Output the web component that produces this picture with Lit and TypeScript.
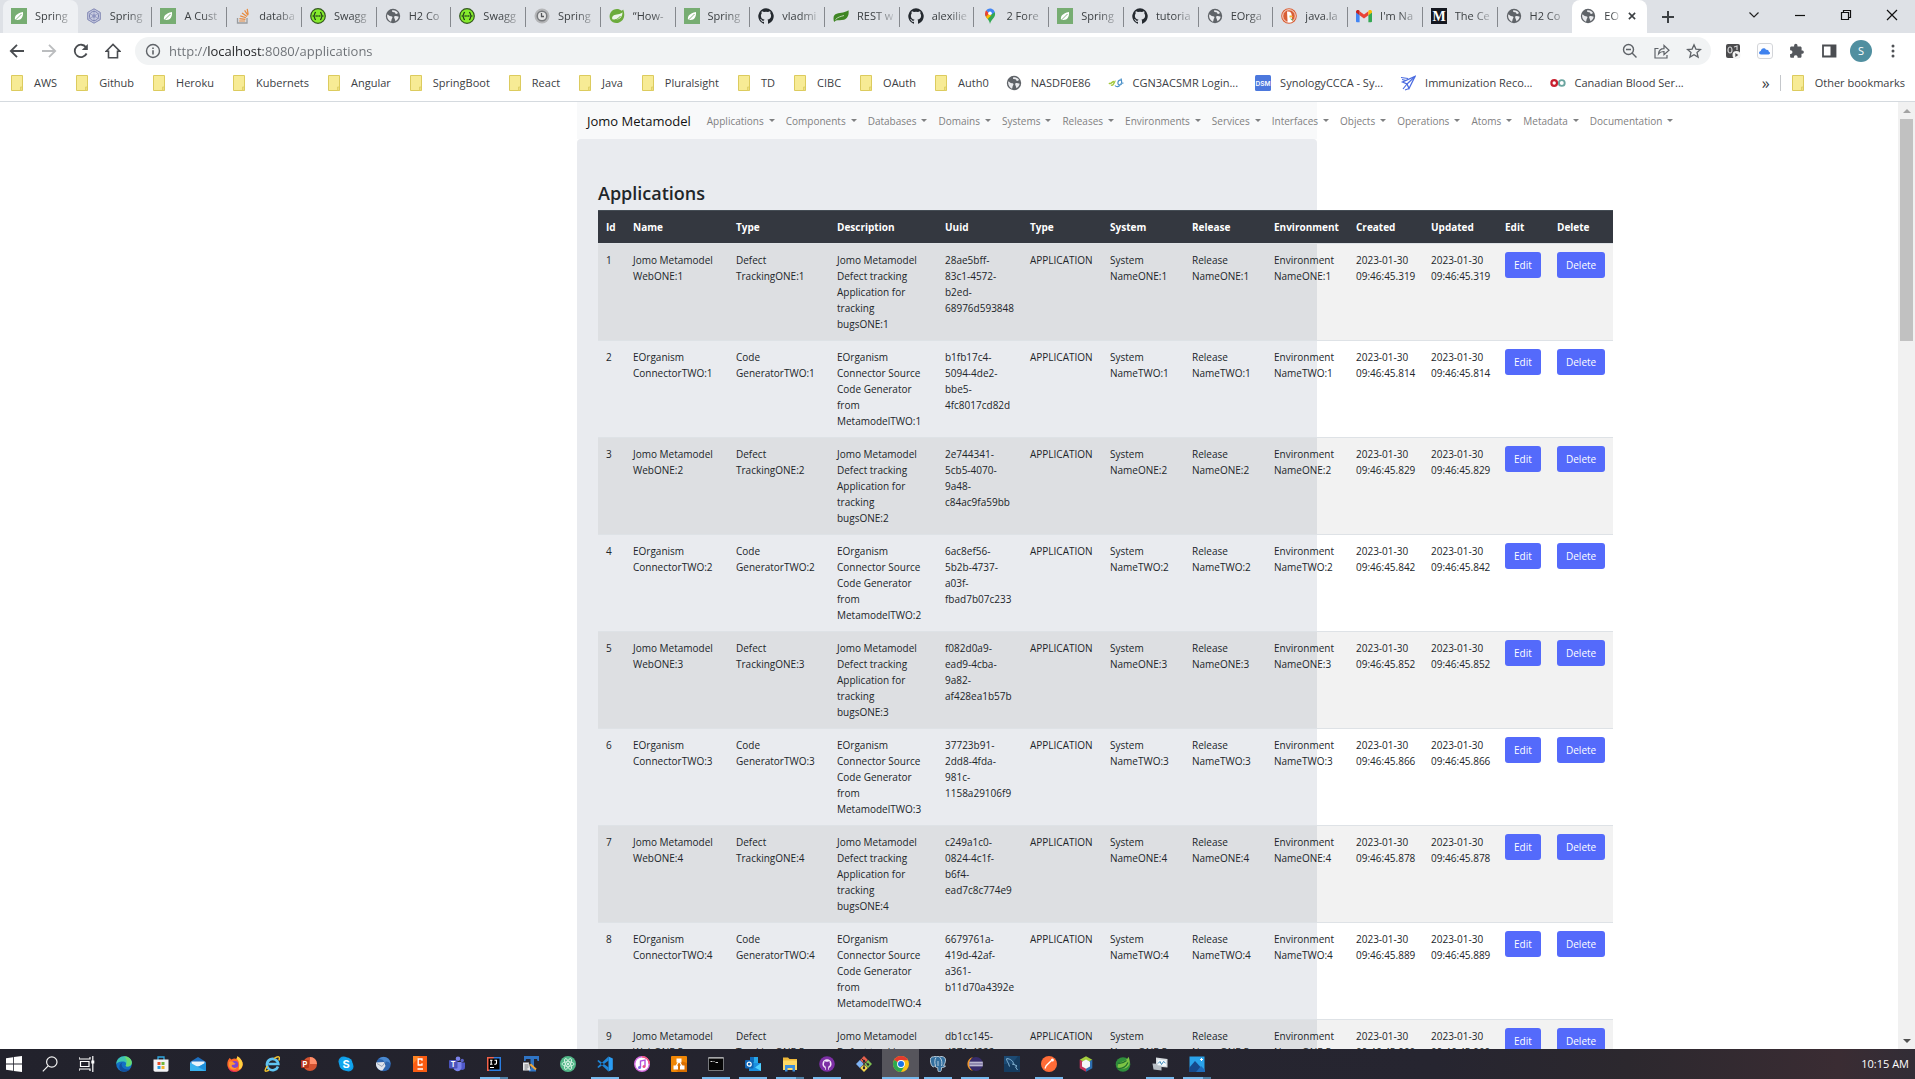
import { LitElement, html, css, svg } from "lit";
import { customElement } from "lit/decorators.js";

const pic = (body: unknown, box = "0 0 16 16") =>
  html`<svg class="pic" viewBox=${box} aria-hidden="true">${body}</svg>`;

/* ---------- site icons ---------- */
const leafTile = () => pic(svg`<rect width="16" height="16" fill="#77ad72"/><path d="M4 12c-.6-4 1.400-6.500 8-8 .4 4.500-1.500 8-5.500 8-1 0-1.500-.2-2-.6z" fill="#fff"/><path d="M4 12.500 10.500 6" stroke="#77ad72" stroke-width=".9"/>`);
const hexWheel = () => pic(svg`<path d="M8 .8 14.300 4.400v7.200L8 15.200 1.700 11.600V4.400z" fill="#c9cce0" stroke="#8288b4"/><circle cx="8" cy="8" r="4.600" fill="none" stroke="#7d84b3"/><circle cx="8" cy="8" r="1.800" fill="#8a90bd"/><path d="M8 1v14M2 4.500l12 7M14 4.500l-12 7" stroke="#8f95bf" stroke-width=".7"/>`);
const stack = () => pic(svg`<path d="M2.500 10v5h9.500v-5" fill="none" stroke="#9a9c9f" stroke-width="1.300"/><path d="M4.200 13h6M4.400 10.600l6 .7M5.200 7.900l5.700 1.900M7 5l5 3.400M9.600 2.400l3.400 5M12.200.8l1 5.800" stroke="#e88a3c" stroke-width="1.200"/>`);
const swagger = () => pic(svg`<circle cx="8" cy="8" r="7.300" fill="#85ea2d" stroke="#33571f" stroke-width="1.200"/><path d="M6 4.300c-2.200 0-.6 3-2.500 3.700 1.900.7.300 3.700 2.500 3.700M10 4.300c2.200 0 .6 3 2.500 3.700-1.900.7-.3 3.700-2.500 3.700" fill="none" stroke="#24401a" stroke-width="1.300"/><path d="M5.500 8h5" stroke="#24401a" stroke-width="1.500" stroke-dasharray="1.300 .5"/>`);
const globe = () => pic(svg`<circle cx="8" cy="8" r="7.200" fill="#5f6368"/><path d="M2.200 6.500c1.500.2 2 1.800 3.800 1.800 1.700 0 1.800 1.400 1 2.300-.7.800-.3 2.200-1 3.100-2.500-1-4.300-3.900-3.800-7.200zM7.200 2.300c-.8 1.500.7 2 2 1.900 1.300 0 .8 1.600 1.800 1.700 1 .2 1.300-.7 2.200-.6-1.200-2.200-3.500-3.300-6-3zM9.500 8.200c1.200-.5 2.900.2 4.200.6-.4 2-1.700 3.600-3.400 4.400.3-1.600-2-3.900-.8-5z" fill="#e9eaed"/>`);
const clock = () => pic(svg`<circle cx="8" cy="8" r="7.500" fill="#b5b6b8"/><circle cx="8" cy="8" r="5.500" fill="#77797c"/><circle cx="8" cy="8" r="4" fill="#e5e5e6"/><path d="M7.500 5v3.500H10" fill="none" stroke="#55575a" stroke-width="1.300"/>`);
const spring = () => pic(svg`<path d="M14.200 1.500c1.500 3.500 1.500 7.700-.6 10.400C10 16.200 4 15.800 1.500 12 .2 9.500.2 6.500 1.800 4.300 4.500.5 9.500.200 12.500 2.700c.7-.2 1.300-.6 1.700-1.200z" fill="#6cab3c"/><path d="M13.500 4.200c-2 2.400-6.500 1.600-9 3.300-1.600 1-1.800 2.900-.9 4.100 3.900.9 9.900-.4 9.900-7.400z" fill="#eef4ea"/><path d="M3 12.300c3.500 0 6.500-1.300 8.500-4.300" fill="none" stroke="#6cab3c"/>`);
const github = () => pic(svg`<path d="M8 .2a8 8 0 0 0-2.500 15.500c.4.1.500-.2.500-.4v-1.500c-2.200.5-2.700-1-2.700-1-.4-.9-.9-1.200-.9-1.200-.7-.5.1-.5.100-.5.8.1 1.200.8 1.200.8.700 1.300 1.900.9 2.300.7.100-.5.300-.9.500-1.100-1.800-.2-3.600-.9-3.600-4 0-.9.300-1.600.8-2.100-.1-.2-.4-1 .1-2.100 0 0 .7-.2 2.200.8a7.500 7.500 0 0 1 4 0c1.500-1 2.200-.8 2.200-.8.400 1.100.2 1.900.1 2.100.5.600.8 1.300.8 2.100 0 3.100-1.900 3.800-3.700 4 .3.300.6.800.6 1.500v2.300c0 .2.100.5.500.4A8 8 0 0 0 8 .2z" fill="#24292f"/>`);
const leaf = () => pic(svg`<path d="M.500 10.500C.500 4.500 6 5.500 10 4.500c2.400-.6 3.800-1.300 5.500-2.300.6 4-.4 8.300-4.500 9.500-2.800.8-6 .1-8 .8-.8.400-1.300.8-1.800 1.500-.5-.9-.7-2.200-.7-3.500z" fill="#3f8624"/><path d="M2.500 11.500C5 8.800 8 8.500 11 7.500" stroke="#c8dcc0" stroke-width=".9" fill="none"/>`);
const mapPin = () => pic(svg`<path d="M8 16c-.5-2.500-1.300-3.700-2.700-5.500C4 8.800 3 7.500 3 5.200L8 5.500l4.800-1.600c.9 2.900-.2 4.700-1.700 6.600C9.700 12.300 8.600 13.500 8 16z" fill="#34a853"/><path d="M4.200 2.200 8 5.500 4.200 9.200C2.600 6.700 2.700 4 4.200 2.200z" fill="#ea4335"/><path d="M4.200 2.200A5 5 0 0 1 12.800 4L9 7z" fill="#4285f4"/><path d="M4 9 6.500 6l3 1-4 4.200z" fill="#fbbc04"/><circle cx="8" cy="5.200" r="1.800" fill="#fff"/>`);
const duck = () => pic(svg`<circle cx="8" cy="8" r="7.800" fill="#d95f35"/><circle cx="8" cy="8" r="6.300" fill="none" stroke="#fff" stroke-width=".8"/><path d="M6 3.500c3.500-.5 5 1.500 4.700 4.700l.6 5.600c-1.800.7-3.300.7-4.700.2z" fill="#fff"/><path d="M8.500 7.500c2 0 3 .3 3.500.9-1 .9-2.500.8-3.500 1.200z" fill="#f4b731"/><path d="m9 10.500 2.500.5v2z" fill="#5bb65b"/>`);
const gmail = () => pic(svg`<path d="M0 4v9.300c0 .5.400.9.900.9h2.700V6.800z" fill="#4285f4"/><path d="M12.400 6.800v7.400h2.700c.5 0 .9-.4.900-.9V4z" fill="#34a853"/><path d="m3.600 3.300 4.400 3.300 4.400-3.300v3.900L8 10.500 3.600 7.200z" fill="#ea4335"/><path d="M0 3.700c0-1.600 1.800-2.300 2.900-1.400l.7.500v4.400L0 4.600z" fill="#c5221f"/><path d="M16 3.700c0-1.600-1.800-2.300-2.900-1.400l-.7.500v4.400L16 4.600z" fill="#fbbc04"/>`);
const medium = () => pic(svg`<rect width="16" height="16" fill="#14171f"/><text x="8" y="13" text-anchor="middle" font-family="Liberation Serif, serif" font-weight="700" font-size="14" fill="#fff">M</text>`);

/* ---------- bookmark icons ---------- */
const folder = () => pic(svg`<path d="M2.500.500h11v15h-11z" fill="#f7eb95" stroke="#dccb5e"/><path d="M11.500 12h1.500v3.500h-1.500z" fill="#f7eb95" stroke="#dccb5e" stroke-width=".8"/>`);
const scribble = () => pic(svg`<path d="M1 8c1.500 2 3-1.500 5-1.500M3 10c2.500 1.500 3.500-4 4.500-4" fill="none" stroke="#a3c83c" stroke-width="1.400"/><path d="M13.500 5c-4-.5-5 5-1.500 5 2.500 0 1.500-5 1-6.500M12 9.500c-1 3-4 2.500-5 1M15.500 8l-3 .5" fill="none" stroke="#4a90c8" stroke-width="1.200"/>`);
const dsm = () => pic(svg`<rect width="16" height="16" rx="1.500" fill="#4c78dd"/><text x="8" y="11" text-anchor="middle" font-family="Inter, sans-serif" font-weight="600" font-size="6.500" fill="#fff">DSM</text>`);
const plane = () => pic(svg`<path d="M15 1.500 9 13.500 7 9 2.500 7z" fill="#fff" stroke="#4a6be0" stroke-width="1.300"/><path d="M15 1.500 7 9M1 2.500l7 1M2 4.500l4 1M7 9l-4 5M9 13.500 5 15" stroke="#4a6be0" stroke-width="1.200" fill="none"/>`);
const rings = () => pic(svg`<circle cx="4.200" cy="8" r="2.800" fill="none" stroke="#c8202f" stroke-width="2.200"/><circle cx="11.800" cy="8" r="2.900" fill="none" stroke="#6ba5a0" stroke-width="1.900"/>`);

/* ---------- toolbar icons ---------- */
const line = (d: string, w = "1.600", c = "#5f6368") => pic(svg`<path d=${d} fill="none" stroke=${c} stroke-width=${w}/>`);
const back = () => line("M15 8H2M8 1.800 1.800 8 8 14.200", "1.800", "#4a4d51");
const forward = () => line("M1 8h13M8 1.800 14.200 8 8 14.200", "1.800", "#bbbdbf");
const reload = () => pic(svg`<path d="M13.600 10.500A6.200 6.200 0 1 1 13 4.300" fill="none" stroke="#4a4d51" stroke-width="1.800"/><path d="M14.800 1v6H8.800z" fill="#4a4d51"/>`);
const home = () => line("M1.200 8.300 8 1.500l6.800 6.800H12.500v6.400h-9V8.300z", "1.600", "#4a4d51");
const info = () => pic(svg`<circle cx="8" cy="8" r="6.500" fill="none" stroke="#5f6368" stroke-width="1.400"/><path d="M8 7.200v4.200M8 4.400V6" stroke="#5f6368" stroke-width="1.600"/>`);
const zoomOut = () => line("M10.300 10.300 14.500 14.500M4 6.500h5M11.500 6.500a5 5 0 1 1-10 0 5 5 0 0 1 10 0z", "1.400");
const share = () => line("M4.500 5.500H1v9.500h12v-3M4.500 11c.3-3.500 2.500-5.300 5.500-5.300V2.500l5 4.700-5 4.500V8.500C7.500 8.400 5.800 9.200 4.500 11z", "1.200");
const star = () => line("m8 1.800 1.900 4.300 4.600.4-3.500 3 1.100 4.600L8 11.700l-4.100 2.400L5 9.500l-3.500-3 4.600-.4z", "1.300");
const extDark = () => pic(svg`<rect x="1" y="1" width="14" height="14" rx="2" fill="#4b4b4d"/><path d="M3 7c0-4 4-4 4 0s-4 4-4 0M9 4l3-1v4" fill="none" stroke="#d0d0d2" stroke-width="1.200"/><circle cx="11.500" cy="12" r="4" fill="#f4f4f4"/><path d="m10.300 10 3 2-3 2z" fill="#4b4b4d"/>`);
const cloud = () => pic(svg`<rect x=".5" y=".5" width="15" height="15" rx="2.500" fill="#fdfdfe" stroke="#d3d5d9"/><path d="M4 11.500c-2.500 0-2.500-3.300-.2-3.500C4 5.500 7.500 4 9 6.800c2-.6 3 .9 2.800 2 1.700.2 1.600 2.700-.2 2.700z" fill="#3f82ee"/>`);
const puzzle = () => pic(svg`<path d="M13.600 7.500h-1V4.700c0-.7-.6-1.300-1.300-1.300H8.500V2.500a1.700 1.700 0 0 0-3.400 0v.9H2.400c-.7 0-1.300.6-1.300 1.300v2.500H2a1.900 1.900 0 0 1 0 3.700h-.9v2.600c0 .7.600 1.300 1.300 1.300h2.500v-1a1.900 1.900 0 0 1 3.700 0v1h2.600c.7 0 1.300-.6 1.300-1.300v-2.700h1a1.700 1.700 0 0 0 .1-3.300z" fill="#55585d"/>`);
const panel = () => pic(svg`<path d="M2 2.500h12.500v11H2z" fill="none" stroke="#4a4d51" stroke-width="1.800"/><path d="M9.500 2h5.500v12H9.500z" fill="#4a4d51"/>`);
const dots = () => pic(svg`<g fill="#4f5256"><circle cx="8" cy="3" r="1.500"/><circle cx="8" cy="8" r="1.500"/><circle cx="8" cy="13" r="1.500"/></g>`);

/* ---------- taskbar icons ---------- */
const T: Record<string, () => unknown> = {
  Start: () => pic(svg`<path d="M0 2.200 7 1.200v6.400H0zM7.800 1.100 16 0v7.600H7.800zM0 8.400h7v6.400l-7-1zM7.800 8.400H16V16l-8.200-1.100z" fill="#fff"/>`),
  Search: () => line("M6.200 9.800 .8 15.400M15 6a5.200 5.200 0 1 1-10.400 0A5.200 5.200 0 0 1 15 6z", "1.200", "#f2f2f2"),
  "Task view": () => pic(svg`<path d="M0 1v2h11V1M0 15v-2h11v2M1.500 5.500h8.500v5H1.500z" fill="none" stroke="#fff" stroke-width="1.200"/><path d="M13.800 0v16" stroke="#fff" stroke-width="1.200"/><rect x="12.300" y="4.500" width="3" height="3" fill="#fff"/>`),
  Edge: () => pic(svg`<circle cx="8" cy="8" r="7.800" fill="#1470c4"/><path d="M.3 8C.5 3.500 4 .2 8.200.2c4.500 0 7.600 3 7.600 6.400 0 2.500-2 4-4 4-1.500 0-2.300-.6-2-1.300.8-1.300.3-3.300-2-3.700C4.500 5 1.500 6 .3 8z" fill="#3fc6b0"/><path d="M8.200.2c4.500 0 7.600 3 7.600 6.400 0 2.500-2 4-4 4-1.500 0-2.300-.6-2-1.300 2-3 .5-7-1.600-9.100z" fill="#6bdb70"/><path d="M5.500 8.500c.5 4 4 6 8.500 4.400C10.500 17.500 2 16 3.500 9.500 4 8 5 7 6.800 6.300 5.800 7 5.400 7.700 5.500 8.500z" fill="#124f9e"/>`),
  Store: () => pic(svg`<path d="M5 4V1h6v3" fill="none" stroke="#30a8e0" stroke-width="1.300"/><path d="M.5 3.500h15V14c0 1-.7 1.700-1.700 1.700H2.200C1.200 15.700.5 15 .5 14z" fill="#f4f4f6"/><path d="M4.500 6h3v3h-3z" fill="#e8512a"/><path d="M8.500 6h3v3h-3z" fill="#72b63a"/><path d="M4.500 10h3v3h-3z" fill="#2b9fe2"/><path d="M8.500 10h3v3h-3z" fill="#f2b32c"/>`),
  Mail: () => pic(svg`<path d="M0 6 8 1l8 5v9H0z" fill="#1d6fc0"/><path d="M1.500 5.500h13v5h-13z" fill="#e9f4fb"/><path d="M0 6.500 8 11l8-4.500V15H0z" fill="#38b2ee"/><path d="m16 15-8-4 8-4.500z" fill="#1e90dc"/>`),
  Firefox: () => pic(svg`<path d="M1 4.500 2.500 2l2 1.500C6 2.500 8 2 9.500 3L10.500.200C14 2.500 15.800 5.500 15.700 8.500 15.500 12.800 12 15.800 8 15.800S.3 12.600.3 8.300C.3 6.900.5 5.700 1 4.500z" fill="#ff6a2b"/><path d="M10.500.200C14 2.500 15.800 5.500 15.700 8.500c-.3 3-2.500 5-4.200 5C13 9 12 4 9.500 3z" fill="#ffd23f"/><circle cx="7.800" cy="8.500" r="3.400" fill="#7b45d4"/><path d="M2 6c2-.8 4-.3 5 1 1.500.2 2 .6 1 1.300C6.500 9 4.500 8.700 4.400 9.800 5 12 8 12.500 10 11.500 8.500 14.500 3 14 2 10z" fill="#ff9732"/><path d="M1 10.500c1.500 4 6 5.500 10 3.500-2 3-9 3-10-3.500z" fill="#e6295f"/>`),
  "Internet Explorer": () => pic(svg`<path d="M14 10.500A5.700 5.700 0 1 1 14.300 8H4.500" fill="none" stroke="#5fc4f2" stroke-width="2.600"/><path d="M3.500 10C-.5 15 1 16.500 5 14M10 2.500C14.500-.5 16.500.500 14.800 4.500" fill="none" stroke="#f2c22e" stroke-width="1.500"/>`),
  PowerPoint: () => pic(svg`<circle cx="9" cy="8" r="7" fill="#d35230"/><path d="M9 1a7 7 0 0 1 7 7H9z" fill="#ff8f6b"/><rect x="0" y="4" width="8" height="8" rx="1" fill="#b7361c"/><text x="4" y="10.800" text-anchor="middle" font-family="Inter, sans-serif" font-weight="700" font-size="7.500" fill="#fff">P</text>`),
  Skype: () => pic(svg`<circle cx="5.500" cy="5.500" r="5" fill="#0d9be6"/><circle cx="10.500" cy="10.500" r="5" fill="#0d9be6"/><circle cx="8" cy="8" r="6.800" fill="#12a5ee"/><text x="8" y="12" text-anchor="middle" font-family="Inter, sans-serif" font-weight="700" font-size="11" fill="#fff">S</text>`),
  Thunderbird: () => pic(svg`<circle cx="8.500" cy="8" r="7.300" fill="#2c64ad"/><path d="M1 6.500 9 6l1.500 4-3 4.500C4.500 15 1.500 12 1 9z" fill="#dfe4ec"/><path d="M2 7.500 7 10.500l3-4" fill="none" stroke="#9aa5b8"/><path d="M4 3c4-4 11-1.500 11.500 5-2-3-5-3-6-1.500C9 4 6.500 3 4 3z" fill="#4b8ad0"/>`),
  Camtasia: () => pic(svg`<path d="M1 0h14v16H1z" fill="#f95c12"/><path d="M1 8 8 0H1z" fill="#ff8423"/><path d="M10 4.700V3H6.200v6H10V7.300M5.500 13H11" fill="none" stroke="#fff" stroke-width="1.300"/>`),
  Teams: () => pic(svg`<circle cx="13.200" cy="4.500" r="1.700" fill="#5b62c7"/><circle cx="9" cy="2.800" r="2.300" fill="#7b83eb"/><path d="M10 6.500h6v4.500c0 3-3 3.500-4.500 2.500z" fill="#5059c9"/><path d="M4.500 6h8v5.500c0 4.500-7 5-8 .5z" fill="#7b83eb"/><rect y="4" width="8.500" height="8.500" rx="1" fill="#4b53bc"/><text x="4.200" y="10.800" text-anchor="middle" font-family="Inter, sans-serif" font-weight="700" font-size="7" fill="#fff">T</text>`),
  "IntelliJ IDEA": () => pic(svg`<path d="M1 1h8L3 15H1z" fill="#f5624a"/><path d="M8 1h7v14H3z" fill="#2a7de1"/><path d="M2.500 2.500h11v11h-11z" fill="#000"/><path d="M4 4.200h2.500M5.200 4.200v4M4 8.300h2.500M8.500 4.200h2V7c0 1-.7 1.400-2.300 1.200M4 11.500h4" stroke="#fff" fill="none" stroke-width="1.100"/>`),
  "Text editor": () => pic(svg`<path d="M1 0h15v5h-1.500L14 3h-3v10h2v2.500H6V13h1.500V3H3l-.5 2H1z" fill="#2f74c4"/><path d="M0 6.500h6l1.500 8H0z" fill="#e6e7e9"/><path d="M1.500 9h4M1.500 11h4M1.500 13h3" stroke="#77797e"/><path d="m7 8 6 5.500" stroke="#f0a63a" stroke-width="2"/><path d="m6 7 1.500 1" stroke="#333" stroke-width="1.500"/>`),
  Atom: () => pic(svg`<circle cx="8" cy="8" r="8" fill="#52b788"/><g fill="none" stroke="#e3f7ec" stroke-width=".8"><ellipse cx="8" cy="8" rx="6" ry="2.300"/><ellipse cx="8" cy="8" rx="6" ry="2.300" transform="rotate(60 8 8)"/><ellipse cx="8" cy="8" rx="6" ry="2.300" transform="rotate(120 8 8)"/></g><circle cx="8" cy="8" r="1" fill="#fff"/>`),
  "Visual Studio Code": () => pic(svg`<path d="M11.500.500 15.800 2.500v11l-4.300 2z" fill="#2a9df4"/><path d="M11.700 4.500 1.500 12 .3 10.900 11.500.500zM11.700 11.500 1.500 4 .3 5.100 11.500 15.500z" fill="#1e86d8"/>`),
  iTunes: () => pic(svg`<circle cx="8" cy="8" r="7.300" fill="#fff" stroke="#d46adf" stroke-width="1.400"/><path d="M8 .7a7.300 7.300 0 0 1 7.300 7.300" fill="none" stroke="#f4587c" stroke-width="1.400"/><path d="M6.500 11.500V5L11 4v6.500" fill="none" stroke="#b550dc" stroke-width="1.400"/><circle cx="5.500" cy="11.500" r="1.500" fill="#7a64e8"/><circle cx="10" cy="10.500" r="1.500" fill="#ef4f86"/>`),
  "draw.io": () => pic(svg`<rect width="16" height="16" rx="1" fill="#f08705"/><path d="M16 7v9H7L3.500 12.500 10 5z" fill="#d96f00"/><path d="m8 5-3.500 6M8 5l3.500 6" stroke="#fff" stroke-width="1.200"/><path d="M5.500 2.500h5v4h-5zM2.500 9.500H7v4H2.500zM9 9.500h4.500v4H9z" fill="#fff"/>`),
  Terminal: () => pic(svg`<path d="M.5 1.500h15v13H.5z" fill="#060606" stroke="#77797d"/><path d="M.5 2h15" stroke="#d9d9d9"/><path d="M2.500 5.500h2M5.500 5.500h1M7.500 6.500H10" stroke="#ddd"/>`),
  Outlook: () => pic(svg`<path d="M5 1h8v9H5z" fill="#28a8ea"/><path d="M5 1h4v5H5z" fill="#0f6cbd"/><path d="M4 7h12v8H4z" fill="#1a8fe0"/><path d="m16 7-6 4.500 6 3.500z" fill="#50d0ff"/><rect y="4" width="8.500" height="8.500" rx="1" fill="#0e64b4"/><circle cx="4.200" cy="8.200" r="2" fill="none" stroke="#fff" stroke-width="1.200"/>`),
  "File Explorer": () => pic(svg`<path d="M1 1.500h5L7.500 3H15v11H1z" fill="#f0b93a"/><path d="M1 4.500h14V14H1z" fill="#ffd965"/><path d="M3 9h10v6.500h-2.500V12h-5v3.500H3z" fill="#3d8fdd"/>`),
  "GitHub Desktop": () => pic(svg`<circle cx="8" cy="8" r="7.800" fill="#7d2fa5"/><path d="M8 3.300a4.600 4.600 0 0 0-2 8.700v1.800h4V12a4.600 4.600 0 0 0-2-8.700z" fill="#f3e8f8"/><path d="M6.800 14v-3.300C4.500 9.800 4.800 7.200 5.500 6.500V5l1.500.8h2L10.500 5v1.500c.7.700 1 3.300-1.300 4.200V14z" fill="#7d2fa5"/>`),
  Git: () => pic(svg`<path d="m8 0 3.900 3.900L8 7.800 4.100 3.900z" fill="#e8604c"/><path d="m3.900 4.100 3.900 3.900-3.900 3.900L0 8z" fill="#7fb3f5"/><path d="m12.100 4.100L16 8l-3.900 3.900L8.200 8z" fill="#7fbf52"/><path d="m8 8.200 3.900 3.900L8 16l-3.900-3.900z" fill="#f4d54c"/><path d="m5.500 2.500 6.500 6M8 5v7" stroke="#2c2530" fill="none"/><circle cx="8" cy="5" r="1.200" fill="#2c2530"/><circle cx="12" cy="8.500" r="1.200" fill="#2c2530"/><circle cx="8" cy="12" r="1.200" fill="#2c2530"/>`),
  Chrome: () => pic(svg`<circle cx="8" cy="8" r="8" fill="#fbc116"/><path d="M8 8 1.100 4A8 8 0 0 1 15 4.200H8z" fill="#e33b2e"/><path d="M1.100 4A8 8 0 0 0 8 16l3.500-6z" fill="#2da94f"/><circle cx="8" cy="8" r="3.900" fill="#fff"/><circle cx="8" cy="8" r="3" fill="#1a73e8"/>`),
  PostgreSQL: () => pic(svg`<path d="M3.500.8C1 .5 0 2.500.4 5c.3 2.500 1.200 5.300 2.600 5.800 1 .3 1.500-.5 2.300-1.300l.2 1.500c.8.800 1.500.4 2.200.6.300 1.700-.2 4 1.500 4.200 2 .2 2.300-1.700 2.400-4.300 1.300 0 3.300-.3 4-1.500l-2-.3c1.500-2.300 2.600-5.500 1.500-7.500C13.500.2 11 .2 9.500.8 7.500.2 5.500.2 3.500.8z" fill="#336f9e" stroke="#d8e4ee" stroke-width=".8"/><path d="M6 1.500C4.500 4 4.500 7 5.500 9.500M9.800 1.300c2 2 2.500 5.500 1.800 8.700M8 5v5" fill="none" stroke="#d8e4ee" stroke-width=".8"/>`),
  Eclipse: () => pic(svg`<path d="M6 1C-1.500 3-1.500 13 6 15 2 12 2 4 6 1z" fill="#f0962c"/><circle cx="9" cy="8" r="7" fill="#372c6b"/><path d="M2.300 6.200h13.500M2 8h14M2.300 9.800h13.500" stroke="#e8e6f3" stroke-width="1.100"/>`),
  "MySQL Workbench": () => pic(svg`<rect width="16" height="16" fill="#1c4a73"/><path d="M0 8h8L14 0h2v16H0z" fill="#153c60"/><path d="M2.500 2.500C7 3 9 5 10 8.500l3 1.500-1.500.8L13.500 14M2.500 3c.5 2 1 3 2 4.500l1 3M10 8.500 8 8" fill="none" stroke="#8fbfe0" stroke-width=".9"/>`),
  Postman: () => pic(svg`<circle cx="8" cy="8" r="8" fill="#ff6c37"/><path d="m4 12.500 1.200-2.800 5-5" stroke="#fff" stroke-width="1.300" fill="none"/><circle cx="11.400" cy="4" r="1.500" fill="#fff"/>`),
  NetBeans: () => pic(svg`<path d="m8 .300 6.300 3.500L8 7.500 1.700 3.800z" fill="#a4cf3d"/><path d="M1.700 3.800 8 7.500v8.200l-6.300-3.500z" fill="#c2335b"/><path d="M14.300 3.800 8 7.500v8.200l6.300-3.500z" fill="#2e6fb0"/><path d="m8 3.500 4 2.300v4.600l-4 2.300-4-2.300V5.800z" fill="#f3f5f7"/>`),
  "Spring Tools": () => pic(svg`<circle cx="8" cy="8.500" r="7.300" fill="#2f8f3c"/><path d="M13.500.8c2.500 5 1.500 12-6 12-2.500 0-4.500-1-5-2 .5-6 8.500-4 11-10z" fill="#7cc344"/><path d="M2 12.500c5 .5 9-1.500 11-6M2.500 7C6 8 9 6.500 11.500 4.500" fill="none" stroke="#217030" stroke-width="1.200"/>`),
  Monitor: () => pic(svg`<path d="M4 1.500 15.500 3v8.500L4 10.500z" fill="#d7dce0"/><path d="m.5 7.500 9 .5v6.500l-8-1z" fill="#b8bfc6"/><path d="M5.500 3.500 14 4.500V10l-8.500-.8z" fill="#f5fafd"/><path d="m6 7.500 2-2 1.500 3 2-3 2 1.500" fill="none" stroke="#3d88b8"/>`),
  Photos: () => pic(svg`<path d="M.5.500h15v15H.5z" fill="#2aa3ea"/><path d="m0 12 6-7 10 11H0z" fill="#164a8c"/><path d="m7 16 5-6 4 4v2z" fill="#1e6cbb"/><path d="M12.500 2v3M11 3.500h3" stroke="#fff"/>`),
};

const tabs: [() => unknown, string][] = [
  [leafTile, "Spring"], [hexWheel, "Spring"], [leafTile, "A Cust"], [stack, "databa"],
  [swagger, "Swagg"], [globe, "H2 Co"], [swagger, "Swagg"], [clock, "Spring"],
  [spring, "“How-"], [leafTile, "Spring"], [github, "vladmi"], [leaf, "REST w"],
  [github, "alexilie"], [mapPin, "2 Fore"], [leafTile, "Spring"], [github, "tutoria"],
  [globe, "EOrga"], [duck, "java.la"], [gmail, "I'm Na"], [medium, "The Ce"],
  [globe, "H2 Co"], [globe, "EO"],
];

const bookmarks: [() => unknown, string][] = [
  ...["AWS", "Github", "Heroku", "Kubernets", "Angular", "SpringBoot", "React", "Java", "Pluralsight", "TD", "CIBC", "OAuth", "Auth0"]
    .map((n): [() => unknown, string] => [folder, n]),
  [globe, "NASDF0E86"], [scribble, "CGN3ACSMR Login..."], [dsm, "SynologyCCCA - Sy..."],
  [plane, "Immunization Reco..."], [rings, "Canadian Blood Ser..."],
];

const menus = ["Applications", "Components", "Databases", "Domains", "Systems", "Releases", "Environments",
  "Services", "Interfaces", "Objects", "Operations", "Atoms", "Metadata", "Documentation"];

const heads = ["Id", "Name", "Type", "Description", "Uuid", "Type", "System", "Release", "Environment", "Created", "Updated", "Edit", "Delete"];

const records: [string, string][] = [
  ["28ae5bff-83c1-4572-b2ed-68976d593848", "319"],
  ["b1fb17c4-5094-4de2-bbe5-4fc8017cd82d", "814"],
  ["2e744341-5cb5-4070-9a48-c84ac9fa59bb", "829"],
  ["6ac8ef56-5b2b-4737-a03f-fbad7b07c233", "842"],
  ["f082d0a9-ead9-4cba-9a82-af428ea1b57b", "852"],
  ["37723b91-2dd8-4fda-981c-1158a29106f9", "866"],
  ["c249a1c0-0824-4c1f-b6f4-ead7c8c774e9", "878"],
  ["6679761a-419d-42af-a361-b11d70a4392e", "889"],
  ["db1cc145-d871-4222-b0a1-52c0b7f6ad13", "900"],
];

const running = new Set(["IntelliJ IDEA", "Visual Studio Code", "Terminal", "Outlook", "File Explorer", "GitHub Desktop",
  "Chrome", "PostgreSQL", "Eclipse", "Postman", "Monitor", "Photos"]);
const stacked = new Set(["IntelliJ IDEA", "File Explorer", "Photos"]);

const reset = css`
  * { box-sizing: border-box; }
  button { font: inherit; color: inherit; background: none; border: 0; padding: 0; margin: 0; cursor: pointer; }
  a { color: inherit; text-decoration: none; }
  .pic { display: block; flex: none; width: 16px; height: 16px; }
`;

@customElement("browser-chrome")
class BrowserChrome extends LitElement {
  static styles = [reset, css`
    :host { display: block; font: 11px/16px "Open Sans", sans-serif; color: #3c4043; background: #fff; border-bottom: 1px solid #d5dadf; }
    .strip { display: flex; height: 33px; background: #dee1e6; padding-left: 3px; }
    .tabs { flex: 1; min-width: 0; display: grid; grid-template-columns: repeat(22, 1fr); }
    .tab { position: relative; display: flex; align-items: center; gap: 8px; min-width: 0; padding: 0 7px 2px 8px; text-align: left; }
    .tab::after { content: ""; position: absolute; right: 0; top: 7px; width: 1px; height: 20px; background: #85888d; }
    .tab.hover { background: #eef0f3; border-radius: 8px 8px 0 0; }
    .tab.hover::after, .tab.next::after, .tab.active::after { display: none; }
    .tab.active { background: #fff; border-radius: 8px 8px 0 0; }
    .title { flex: 1; min-width: 0; overflow: hidden; white-space: nowrap; mask-image: linear-gradient(90deg, #000 50%, rgba(0, 0, 0, .2)); }
    .close { display: block; margin-right: 3px; }
    .close .pic { width: 10px; height: 10px; }
    .controls { display: flex; flex: none; padding-bottom: 4px; }
    .controls button { display: grid; place-items: center; width: 46px; }
    .controls .add { width: 42px; margin-right: 42px; padding-top: 4px; }
    .bar { display: flex; align-items: center; height: 36px; padding-right: 6px; }
    .bar button { display: grid; place-items: center; width: 32px; height: 28px; }
    .nav { display: flex; width: 135px; padding-left: 1px; }
    .omni { flex: 1; display: flex; align-items: center; height: 28px; background: #f1f3f4; border-radius: 14px; padding: 0 1px 0 10px; }
    .url { flex: 1; min-width: 0; height: 24px; border: 0; outline: 0; padding: 0; margin-left: 8px; font: 13px/24px "Open Sans", sans-serif;
      color: transparent; background: linear-gradient(90deg, #6b6f74 38px, #202124 38px 94px, #6b6f74 94px); background-clip: text; -webkit-background-clip: text; }
    .ext { display: flex; padding-left: 6px; }
    .avatar { display: grid; place-items: center; width: 22px; height: 22px; border-radius: 11px; background: #508fa0; color: #fff; font-size: 11px; }
    .marks { display: flex; align-items: center; height: 32px; padding: 0 10px 4px 9px; gap: 17px; white-space: nowrap; }
    .marks a { display: flex; align-items: center; gap: 9px; }
    .more { margin-left: auto; font-size: 16px; }
    .other { border-left: 1px solid #c4c7cb; padding-left: 9px; margin-left: -7px; }
  `];

  render() {
    return html`
      <div class="strip">
        <div class="tabs" role="tablist">
          ${tabs.map(([icon, name], i) => {
            const last = i === tabs.length - 1;
            const state = last ? "active" : i === 0 ? "hover" : i === tabs.length - 2 ? "next" : "";
            return html`<div class="tab ${state}" role="tab">
              ${icon()}<span class="title">${name}</span>
              ${last ? html`<button class="close" aria-label="Close tab">${pic(svg`<path d="M3 3l10 10M13 3 3 13" stroke="#3c4043" stroke-width="2.500"/>`)}</button>` : ""}
            </div>`;
          })}
        </div>
        <div class="controls">
          <button class="add" aria-label="New tab">${pic(svg`<path d="M8 2v12M2 8h12" stroke="#3c4043" stroke-width="2"/>`)}</button>
          <button aria-label="Search tabs">${line("m3.500 5.500 4.500 4.500 4.500-4.500", "1.200", "#222")}</button>
          <button aria-label="Minimize">${line("M3 8.500h10", "1.200", "#111")}</button>
          <button aria-label="Restore">${line("M3.500 5.500h7v7h-7zM5.500 5.500v-2h7v7h-2", "1.200", "#111")}</button>
          <button aria-label="Close">${line("M3 3l10 10M13 3 3 13", "1.200", "#111")}</button>
        </div>
      </div>
      <div class="bar">
        <div class="nav">
          <button aria-label="Back">${back()}</button><button aria-label="Forward">${forward()}</button>
          <button aria-label="Reload">${reload()}</button><button aria-label="Home">${home()}</button>
        </div>
        <div class="omni">
          ${info()}
          <input class="url" aria-label="Address" value="http://localhost:8080/applications" spellcheck="false" />
          <button aria-label="Zoom">${zoomOut()}</button><button aria-label="Share">${share()}</button><button aria-label="Bookmark">${star()}</button>
        </div>
        <div class="ext">
          <button aria-label="Recorder">${extDark()}</button><button aria-label="iCloud">${cloud()}</button>
          <button aria-label="Extensions">${puzzle()}</button><button aria-label="Side panel">${panel()}</button>
          <button aria-label="Profile"><span class="avatar">S</span></button><button aria-label="Menu">${dots()}</button>
        </div>
      </div>
      <nav class="marks">
        ${bookmarks.map(([icon, name]) => html`<a href="#">${icon()}${name}</a>`)}
        <button class="more" aria-label="More bookmarks">»</button>
        <a class="other" href="#">${folder()}Other bookmarks</a>
      </nav>`;
  }
}

@customElement("task-bar")
class TaskBar extends LitElement {
  static styles = [reset, css`
    :host { display: flex; height: 30px; padding-right: 6px; color: #fff; font: 11px/30px "Open Sans", sans-serif;
      background: linear-gradient(90deg, #22222c, #262530 75%, #2c282e 85%, #3a2c33 96%, #322d36); }
    .app { position: relative; display: grid; place-items: center; width: 37px; height: 30px; }
    .app:first-child { width: 31px; padding-right: 4px; }
    .app.running::after { content: ""; position: absolute; left: 5px; right: 4px; bottom: 0; height: 2px; background: #76b9ed; }
    .app.stacked::after { background: linear-gradient(90deg, #76b9ed 20px, #4f80a5 20px); }
    .app.focused { background: #56555c; }
    .app.focused::after { left: 0; right: 0; }
    .time { margin-left: auto; }
  `];

  render() {
    return html`
      ${Object.entries(T).map(([name, icon]) => html`
        <button aria-label=${name}
          class="app ${running.has(name) ? "running" : ""} ${stacked.has(name) ? "stacked" : ""} ${name === "Chrome" ? "focused" : ""}">${icon()}</button>`)}
      <time class="time">10:15 AM</time>`;
  }
}

@customElement("app-root")
class AppRoot extends LitElement {
  static styles = [reset, css`
    :host { display: flex; flex-direction: column; height: 100vh; overflow: hidden; background: #fff; color: #212529; font: 10px/16px "Open Sans", sans-serif; }
    browser-chrome, task-bar { flex: none; }
    .view { flex: 1; min-height: 0; display: flex; }
    .page { flex: 1; min-width: 0; overflow: hidden; padding-right: 4px; }
    .container { width: 740px; margin: 0 auto; }
    .navbar { display: flex; align-items: center; height: 37px; padding-left: 10px; background: #f8f9fa; white-space: nowrap; }
    .brand { font-size: 13px; color: #111; margin-right: 11px; }
    .menu { display: flex; align-items: center; gap: 5px; padding: 0 6px 0 5px; color: #7f8081; }
    .menu::after { content: ""; border: 3px solid transparent; border-top-color: currentColor; border-bottom: 0; }
    .jumbotron { background: #e9ebef; border-radius: 4px; padding: 43px 21px; }
    h1 { margin: 0 0 6px; font-size: 18px; line-height: 22px; font-weight: 600; }
    table { width: 1015px; table-layout: fixed; border-collapse: collapse; }
    th, td { padding: 8px; text-align: left; vertical-align: top; border-top: 1px solid #dee2e6; }
    th { background: #343840; color: #fff; font-weight: 700; border-color: #454d55; white-space: nowrap; }
    tbody tr:nth-child(odd) { background: rgba(0, 0, 0, .05); }
    .desc { padding-right: 14px; }
    .w27 { width: 27px; } .w52 { width: 52px; } .w64 { width: 64px; } .w74 { width: 74px; } .w75 { width: 75px; }
    .w80 { width: 80px; } .w82 { width: 82px; } .w85 { width: 85px; } .w101 { width: 101px; } .w103 { width: 103px; } .w108 { width: 108px; }
    .btn { display: block; height: 26px; padding: 0 9px; border-radius: 3px; background: #546afb; color: #fff; white-space: nowrap; }
    .scroll { flex: none; width: 17px; background: #f1f1f1; display: flex; flex-direction: column; align-items: center; }
    .arrow { display: grid; place-items: center; width: 17px; height: 17px; }
    .arrow::after { content: ""; border: 4px solid transparent; border-bottom-color: #a3a3a3; border-top: 0; }
    .arrow.down { margin-top: auto; }
    .arrow.down::after { border: 4px solid transparent; border-top-color: #505050; border-bottom: 0; }
    .thumb { width: 13px; height: 222px; background: #c1c1c1; }
  `];

  row([uuid, ms]: [string, string], i: number) {
    const one = i % 2 === 0;
    const tag = `${one ? "ONE" : "TWO"}:${Math.floor(i / 2) + 1}`;
    const stamp = `2023-01-30 09:46:45.${ms}`;
    const name = (one ? "Jomo Metamodel Web" : "EOrganism Connector") + tag;
    const kind = (one ? "Defect Tracking" : "Code Generator") + tag;
    const text = (one
      ? "Jomo Metamodel Defect tracking Application for tracking bugs"
      : "EOrganism Connector Source Code Generator from Metamodel") + tag;
    return html`<tr>
      <td>${i + 1}</td>
      <td>${name}</td>
      <td>${kind}</td>
      <td class="desc">${text}</td>
      <td>${uuid}</td>
      <td>APPLICATION</td>
      ${["System", "Release", "Environment"].map((k) => html`<td>${k + " Name" + tag}</td>`)}
      <td>${stamp}</td>
      <td>${stamp}</td>
      <td><button class="btn">Edit</button></td>
      <td><button class="btn">Delete</button></td>
    </tr>`;
  }

  render() {
    const cols = ["w27", "w103", "w101", "w108", "w85", "w80", "w82", "w82", "w82", "w75", "w74", "w52", "w64"];
    return html`
      <browser-chrome></browser-chrome>
      <div class="view">
        <main class="page">
          <div class="container">
            <nav class="navbar">
              <a class="brand" href="#">Jomo Metamodel</a>
              ${menus.map((m) => html`<a class="menu" href="#">${m}</a>`)}
            </nav>
            <section class="jumbotron">
              <h1>Applications</h1>
              <table>
                <colgroup>${cols.map((c) => html`<col class=${c} />`)}</colgroup>
                <thead><tr>${heads.map((h) => html`<th scope="col">${h}</th>`)}</tr></thead>
                <tbody>${records.map((r, i) => this.row(r, i))}</tbody>
              </table>
            </section>
          </div>
        </main>
        <div class="scroll" aria-hidden="true">
          <span class="arrow"></span><span class="thumb"></span><span class="arrow down"></span>
        </div>
      </div>
      <task-bar></task-bar>`;
  }
}
